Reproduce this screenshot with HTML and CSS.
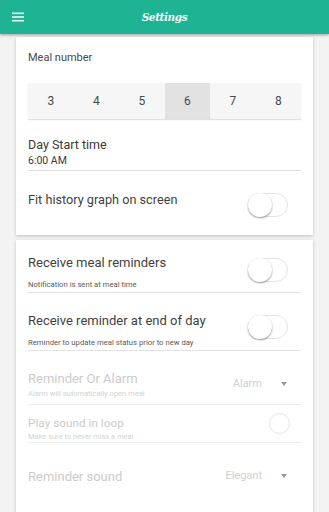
FILE: index.html
```html
<!DOCTYPE html>
<html>
<head>
<meta charset="utf-8">
<link rel="stylesheet" href="styles.css">
</head>
<body>
<header class="appbar">
  <svg class="menu" width="12" height="10" viewBox="0 0 12 10"><rect x="0" y="0.5" width="12" height="1.6" fill="#e6fbf5"/><rect x="0" y="4.2" width="12" height="1.6" fill="#e6fbf5"/><rect x="0" y="7.9" width="12" height="1.6" fill="#e6fbf5"/></svg>
  <div class="title">Settings</div>
</header>
<main class="content">
  <section class="card card-top">
    <div class="label">Meal number</div>
    <div class="segments">
      <div class="seg">3</div><div class="seg">4</div><div class="seg">5</div><div class="seg active">6</div><div class="seg">7</div><div class="seg">8</div>
    </div>
    <div class="field">
      <div class="field-title">Day Start time</div>
      <div class="field-value">6:00 AM</div>
    </div>
    <div class="fit-row">
      <div class="fit-title">Fit history graph on screen</div>
      <div class="toggle"><div class="knob"></div></div>
    </div>
  </section>
  <section class="card card-bottom">
    <div class="row r1">
      <div class="texts">
        <div class="row-title">Receive meal reminders</div>
        <div class="row-sub">Notification is sent at meal time</div>
      </div>
      <div class="toggle"><div class="knob"></div></div>
    </div>
    <div class="row r2">
      <div class="texts">
        <div class="row-title">Receive reminder at end of day</div>
        <div class="row-sub">Reminder to update meal status prior to new day</div>
      </div>
      <div class="toggle"><div class="knob"></div></div>
    </div>
    <div class="drow d1">
      <div class="texts">
        <div class="dtitle">Reminder Or Alarm</div>
        <div class="dsub">Alarm will automatically open meal</div>
      </div>
      <div class="select"><span class="sval">Alarm</span><span class="caret"></span></div>
    </div>
    <div class="drow d2">
      <div class="texts">
        <div class="dtitle small">Play sound in loop</div>
        <div class="dsub">Make sure to never miss a meal</div>
      </div>
      <div class="check"></div>
    </div>
    <div class="drow d3">
      <div class="texts">
        <div class="dtitle">Reminder sound</div>
      </div>
      <div class="select"><span class="sval">Elegant</span><span class="caret"></span></div>
    </div>
  </section>
</main>
</body>
</html>
```

FILE: styles.css
```css
html, body {
  margin: 0;
  padding: 0;
  height: 512px;
  overflow: hidden;
}
body {
  background: #f3f3f3;
  font-family: Roboto, "Liberation Sans", Arial, sans-serif;
  color: #333;
}
.appbar {
  height: 34px;
  background: #1eb393;
  box-shadow: 0 1px 3px rgba(0,0,0,0.35);
  display: flex;
  align-items: center;
  position: relative;
  z-index: 2;
}
.menu {
  margin-left: 12px;
}
.title {
  flex: 1;
  text-align: center;
  margin-right: 24px;
  color: #f4fffb;
  font-family: "DejaVu Serif", "Liberation Serif", serif;
  font-style: italic;
  font-weight: bold;
  font-size: 10.5px;
  letter-spacing: -0.4px;
}
.content {
  padding: 3px 16px 0;
}
.card {
  background: #fff;
  box-shadow: 0 1px 3px rgba(0,0,0,0.22);
  padding: 0 12px;
}
.card-top {
  padding-top: 14px;
}
.label {
  font-size: 11px;
  line-height: 14px;
  color: #4a4a4a;
}
.segments {
  margin-top: 18px;
  height: 36px;
  display: flex;
  background: #f6f6f6;
  box-shadow: 0 1px 1px rgba(0,0,0,0.12);
}
.seg {
  flex: 1;
  display: flex;
  align-items: center;
  justify-content: center;
  font-size: 12px;
  color: #4a4a4a;
}
.seg.active {
  background: #e2e2e2;
}
.field {
  margin-top: 18px;
  padding-bottom: 2px;
  border-bottom: 1px solid #e2e2e2;
}
.field-title {
  font-size: 12.5px;
  line-height: 16px;
  color: #3a3a3a;
}
.field-value {
  font-size: 10.5px;
  line-height: 14px;
  color: #3a3a3a;
  margin-top: 1px;
}
.fit-row {
  height: 64px;
  display: flex;
  justify-content: space-between;
  align-items: flex-start;
}
.fit-title {
  margin-top: 21px;
  font-size: 12.7px;
  line-height: 16px;
  color: #3f3f3f;
}
.fit-row .toggle {
  margin-top: 22px;
}
.toggle {
  width: 40px;
  height: 24px;
  box-sizing: border-box;
  border: 1px solid #e4e4e4;
  border-radius: 12px;
  margin-right: 13px;
  position: relative;
  background: #fff;
}
.knob {
  position: absolute;
  left: -1px;
  top: -1px;
  width: 24px;
  height: 24px;
  border-radius: 50%;
  background: #fff;
  box-shadow: 0 1px 2px rgba(0,0,0,0.45);
}
.card-bottom {
  margin-top: 5px;
  height: 300px;
}
.row, .drow {
  display: flex;
  justify-content: space-between;
  align-items: flex-start;
  box-sizing: border-box;
}
.row {
  border-bottom: 1px solid #e2e2e2;
}
.r1 {
  height: 53px;
}
.r1 .texts {
  padding-top: 15px;
}
.r2 {
  height: 58px;
}
.r2 .texts {
  padding-top: 20px;
}
.row-title {
  font-size: 13px;
  line-height: 16px;
  color: #3f3f3f;
}
.row-sub {
  margin-top: 9px;
  font-size: 7.7px;
  line-height: 10px;
  color: #5a5a5a;
}
.r1 .toggle {
  margin-top: 18px;
}
.r2 .toggle {
  margin-top: 22px;
}
.dtitle {
  font-size: 13px;
  line-height: 16px;
  color: #cbcbcb;
}
.dtitle.small {
  font-size: 11.8px;
  line-height: 14px;
}
.dsub {
  font-size: 7.5px;
  line-height: 10px;
  color: #d2d2d2;
  margin-top: 2px;
}
.select {
  display: flex;
  align-items: center;
}
.sval {
  font-size: 11px;
  line-height: 14px;
  color: #cfcfcf;
}
.caret {
  width: 0;
  height: 0;
  border-left: 3.5px solid transparent;
  border-right: 3.5px solid transparent;
  border-top: 4px solid #9a9a9a;
  margin-left: 19px;
  margin-right: 14px;
}
.d1 {
  height: 54px;
  border-bottom: 1px solid #ececec;
}
.d1 .texts {
  padding-top: 20px;
}
.d1 .select {
  margin-top: 26px;
}
.d2 {
  height: 38px;
  border-bottom: 1px solid #ececec;
}
.d2 .texts {
  padding-top: 11px;
}
.check {
  width: 21px;
  height: 21px;
  box-sizing: border-box;
  border: 1px solid #e4e4e4;
  border-radius: 50%;
  margin-top: 8px;
  margin-right: 11px;
}
.d3 {
  height: 60px;
}
.d3 .texts {
  padding-top: 26px;
}
.d3 .select {
  margin-top: 26px;
}
```
